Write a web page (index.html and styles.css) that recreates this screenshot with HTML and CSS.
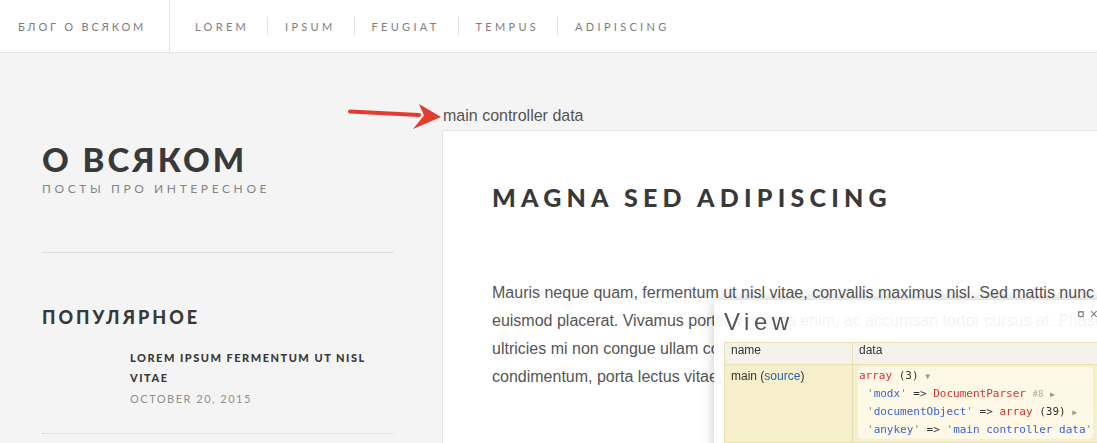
FILE: index.html
```html
<!DOCTYPE html>
<html lang="ru">
<head>
<meta charset="utf-8">
<title>Блог о всяком</title>
<link rel="stylesheet" href="styles.css">
</head>
<body>
<header class="topbar">
  <a class="brand" href="#">Блог о всяком</a>
  <nav class="menu">
    <a class="menu-item" href="#">Lorem</a>
    <a class="menu-item" href="#">Ipsum</a>
    <a class="menu-item" href="#">Feugiat</a>
    <a class="menu-item" href="#">Tempus</a>
    <a class="menu-item" href="#">Adipiscing</a>
  </nav>
</header>

<div class="layout">
  <aside class="sidebar">
    <section class="intro">
      <h1 class="site-title">О всяком</h1>
      <p class="site-sub">Посты про интересное</p>
    </section>
    <section class="popular">
      <h2 class="popular-title">Популярное</h2>
      <article class="mini-post">
        <div class="mini-thumb"></div>
        <div class="mini-body">
          <h3 class="mini-title">Lorem ipsum fermentum ut nisl vitae</h3>
          <time class="mini-date">October 20, 2015</time>
        </div>
      </article>
    </section>
  </aside>

  <main class="content">
    <p class="debug-note">main controller data</p>
    <article class="card">
      <h2 class="card-title">Magna sed adipiscing</h2>
      <p class="card-text">Mauris neque quam, fermentum ut nisl vitae, convallis maximus nisl. Sed mattis nunc<br>euismod placerat. Vivamus porttitor magna enim, ac accumsan tortor cursus at. Phasellus<br>ultricies mi non congue ullam corper. Praesent tincidunt sed tellus ut rutrum. Sed vitae<br>condimentum, porta lectus vitae, ut congue gravida nam non fringilla.</p>
    </article>
  </main>
</div>

<svg class="arrow" width="100" height="32" viewBox="0 0 100 32" aria-hidden="true">
  <line x1="5" y1="11.5" x2="74" y2="15" stroke="#e53a2f" stroke-width="4" stroke-linecap="round"/>
  <polygon points="96,17 74,4 79,15.5 68,29" fill="#e53a2f"/>
</svg>

<div class="debugbar">
  <div class="debug-head">
    <span class="debug-title">View</span>
    <span class="debug-tools"><span class="tool">¤</span><span class="tool">×</span></span>
  </div>
  <table class="debug-table">
    <thead>
      <tr><th class="col-name">name</th><th class="col-data">data</th></tr>
    </thead>
    <tbody>
      <tr>
        <td class="col-name">main (<a class="src" href="#">source</a>)</td>
        <td class="col-data">
          <div class="dump">
            <div><span class="t-red">array</span> (3) <span class="t-tri">▼</span></div>
            <div class="ind"><span class="t-q">'</span><span class="t-key">modx</span><span class="t-q">'</span> =&gt; <span class="t-red">DocumentParser</span> <span class="t-hash">#8</span> <span class="t-tri">▶</span></div>
            <div class="ind"><span class="t-q">'</span><span class="t-key">documentObject</span><span class="t-q">'</span> =&gt; <span class="t-red">array</span> (39) <span class="t-tri">▶</span></div>
            <div class="ind"><span class="t-q">'</span><span class="t-key">anykey</span><span class="t-q">'</span> =&gt; <span class="t-q">'</span><span class="t-key">main controller data</span><span class="t-q">'</span></div>
          </div>
        </td>
      </tr>
    </tbody>
  </table>
</div>
</body>
</html>
```

FILE: styles.css
```css
* { box-sizing: border-box; }

html, body {
  margin: 0;
  padding: 0;
}

body {
  width: 1097px;
  height: 443px;
  overflow: hidden;
  background: #f4f4f4;
  font-family: "Lato", "Open Sans", sans-serif;
  color: #3c3b3b;
}

a { text-decoration: none; color: inherit; }

/* ---------- top bar ---------- */
.topbar {
  display: flex;
  align-items: stretch;
  height: 53px;
  background: #fff;
  border-bottom: 1px solid #e4e4e4;
}

.brand {
  display: flex;
  align-items: center;
  width: 170px;
  padding-left: 18px;
  border-right: 1px solid #e4e4e4;
  font-size: 11px;
  letter-spacing: 2.8px;
  text-transform: uppercase;
  color: #7d7d7d;
}

.menu {
  display: flex;
  align-items: center;
  padding-left: 8px;
}

.menu-item {
  display: flex;
  align-items: center;
  height: 18px;
  padding: 0 18px 0 17px;
  font-size: 11px;
  letter-spacing: 3.3px;
  text-transform: uppercase;
  color: #7d7d7d;
}

.menu-item + .menu-item {
  border-left: 1px solid #e4e4e4;
}

/* ---------- layout ---------- */
.layout {
  display: flex;
  width: 1600px;
}

.sidebar {
  flex: 0 0 352px;
  margin-left: 42px;
  margin-right: 48px;
  padding-top: 86px;
}

.intro {
  padding-bottom: 55px;
  border-bottom: 1px solid #dcdcdc;
}

.site-title {
  margin: 0;
  font-size: 33px;
  line-height: 40px;
  font-weight: 900;
  letter-spacing: 3px;
  text-transform: uppercase;
  color: #3a3939;
}

.site-sub {
  margin: 2px 0 0;
  font-size: 12px;
  line-height: 16px;
  letter-spacing: 3.6px;
  text-transform: uppercase;
  color: #858585;
}

.popular {
  padding-top: 52px;
}

.popular-title {
  margin: 0;
  font-size: 18px;
  line-height: 24px;
  font-weight: 900;
  letter-spacing: 3px;
  text-transform: uppercase;
  color: #3a3939;
}

.mini-post {
  display: flex;
  margin-top: 19px;
  padding-bottom: 24px;
  border-bottom: 1px dotted #cfcfcf;
}

.mini-thumb {
  flex: 0 0 88px;
}

.mini-title {
  margin: 0;
  font-size: 11px;
  line-height: 20px;
  font-weight: 900;
  letter-spacing: 1.5px;
  text-transform: uppercase;
  color: #3a3939;
}

.mini-date {
  display: block;
  margin-top: 1px;
  font-size: 11px;
  line-height: 20px;
  letter-spacing: 1.5px;
  text-transform: uppercase;
  color: #8f8f8f;
}

/* ---------- content ---------- */
.content {
  flex: 0 0 auto;
  padding-top: 54px;
}

.debug-note {
  margin: 0 0 5px 1px;
  font-family: "Liberation Sans", Arial, sans-serif;
  font-size: 16px;
  line-height: 18px;
  color: #555;
}

.card {
  width: 900px;
  height: 400px;
  background: #fff;
  border: 1px solid #e4e4e4;
  padding: 51px 0 0 49px;
}

.card-title {
  margin: 0;
  font-size: 25px;
  line-height: 30px;
  font-weight: 900;
  letter-spacing: 5.2px;
  text-transform: uppercase;
  color: #3a3939;
}

.card-text {
  margin: 67px 0 0;
  font-family: "Liberation Sans", Arial, sans-serif;
  font-size: 16px;
  line-height: 28px;
  color: #555;
  white-space: nowrap;
}

/* ---------- annotation arrow ---------- */
.arrow {
  position: absolute;
  left: 345px;
  top: 100px;
}

/* ---------- debug panel ---------- */
.debugbar {
  position: fixed;
  left: 714px;
  top: 300px;
  width: 520px;
  height: 170px;
  background: rgba(255, 255, 255, 0.93);
  box-shadow: 0 0 12px rgba(0, 0, 0, 0.22);
  font-family: "Liberation Sans", Arial, sans-serif;
}

.debug-head {
  display: flex;
  padding: 8px 0 0 10px;
  height: 42px;
}

.debug-title {
  flex: 0 0 353px;
  font-size: 24px;
  line-height: 28px;
  letter-spacing: 4.5px;
  color: #555;
}

.debug-tools {
  display: flex;
  gap: 5px;
  font-size: 14px;
  line-height: 12px;
  color: #777;
}

.debug-table {
  margin-left: 10px;
  width: 480px;
  table-layout: fixed;
  border-collapse: collapse;
  font-size: 12px;
  color: #333;
}

.debug-table th,
.debug-table td {
  border: 1px solid #e9dfb3;
  text-align: left;
  vertical-align: top;
}

.debug-table th {
  height: 22px;
  padding: 0 6px;
  font-weight: normal;
  background: #f4f2ea;
}

.debug-table td {
  height: 78px;
  background: #f6efcc;
}

.col-name { width: 128px; }

td.col-name {
  padding: 4px 6px;
}

td.col-data {
  padding: 2px 5px;
}

.src { color: #2763b0; }

.dump {
  display: inline-block;
  padding: 0 1px;
  background: #fdf9e6;
  border-radius: 4px;
  font-family: "DejaVu Sans Mono", monospace;
  font-size: 11px;
  line-height: 18px;
  color: #333;
  white-space: nowrap;
}

.dump > div { height: 18px; }

.ind { padding-left: 8px; }
.t-red { color: #cc3333; }
.t-key { color: #3b5fd6; }
.t-q { color: #888; }
.t-hash { color: #aaa; font-size: 9px; line-height: 1; }
.t-tri { color: #999; font-size: 8px; line-height: 1; }
```
